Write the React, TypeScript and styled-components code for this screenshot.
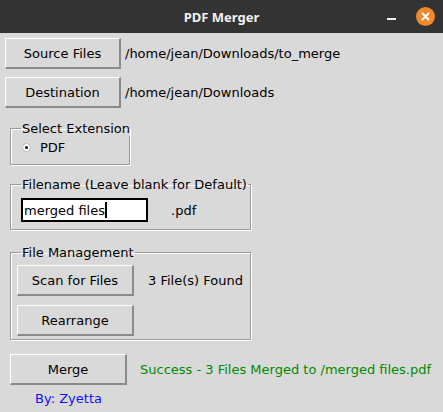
import styled, { createGlobalStyle } from 'styled-components'

const GlobalStyle = createGlobalStyle`
  html, body {
    margin: 0;
    padding: 0;
    background: #d9d9d9;
  }
  body {
    font-family: "DejaVu Sans", sans-serif;
    font-size: 13px;
    color: #000;
  }
`

const Window = styled.div({
  width: '443px',
  height: '412px',
  background: '#d9d9d9',
  display: 'flex',
  flexDirection: 'column',
  overflow: 'hidden',
})

const TitleBar = styled.div({
  height: '33px',
  background: '#333333',
  display: 'flex',
  alignItems: 'center',
  justifyContent: 'center',
  position: 'relative',
  flexShrink: 0,
})

const TitleText = styled.div({
  color: '#f2f2f2',
  fontFamily: '"Noto Sans", "Open Sans", sans-serif',
  fontWeight: 700,
  fontSize: '13px',
})

const WindowControls = styled.div({
  position: 'absolute',
  right: '8px',
  top: '7px',
  display: 'flex',
  alignItems: 'center',
  gap: '20px',
})

const MinimizeBar = styled.span({
  width: '9px',
  height: '2px',
  background: '#f0f0f0',
  marginTop: '4px',
})

const CloseButton = styled.span({
  width: '19px',
  height: '19px',
  borderRadius: '50%',
  background: '#f0882c',
  display: 'flex',
  alignItems: 'center',
  justifyContent: 'center',
})

const Content = styled.div({
  display: 'flex',
  flexDirection: 'column',
  padding: '5px 0 0 5px',
})

const PathRow = styled.div({
  display: 'flex',
  alignItems: 'center',
  gap: '4px',
  marginBottom: '8px',
})

const Button = styled.div<{ $width?: number }>((p) => ({
  width: `${p.$width ?? 116}px`,
  height: '31px',
  boxSizing: 'border-box',
  display: 'flex',
  alignItems: 'center',
  justifyContent: 'center',
  background: '#d9d9d9',
  borderTop: '1px solid #ffffff',
  borderLeft: '1px solid #ffffff',
  borderRight: '2px solid #8a8a8a',
  borderBottom: '2px solid #8a8a8a',
  flexShrink: 0,
}))

const Group = styled.fieldset<{ $width: number; $height: number; $top: number }>((p) => ({
  margin: `${p.$top}px 0 0 5px`,
  width: `${p.$width}px`,
  height: `${p.$height}px`,
  boxSizing: 'border-box',
  padding: '0 6px',
  border: '1px solid #9c9c9c',
  boxShadow: 'inset 1px 1px 0 #ffffff, 1px 1px 0 #ffffff',
  minWidth: 0,
}))

const GroupLabel = styled.legend({
  padding: '0 1px',
  marginLeft: '4px',
  lineHeight: '15px',
  whiteSpace: 'nowrap',
})

const RadioRow = styled.div({
  display: 'flex',
  alignItems: 'center',
  gap: '9px',
  padding: '4px 0 0 5px',
  lineHeight: '15px',
})

const RadioMark = styled.span({
  width: '9px',
  height: '9px',
  boxSizing: 'border-box',
  borderRadius: '50%',
  background: '#ffffff',
  border: '1px solid #b8b8b8',
  display: 'flex',
  alignItems: 'center',
  justifyContent: 'center',
  '&::after': {
    content: '""',
    width: '3px',
    height: '3px',
    borderRadius: '50%',
    background: '#000',
  },
})

const EntryRow = styled.div({
  display: 'flex',
  alignItems: 'center',
  gap: '23px',
  padding: '6px 0 0 4px',
})

const Entry = styled.div({
  width: '127px',
  height: '24px',
  boxSizing: 'border-box',
  border: '2px solid #000',
  background: '#ffffff',
  display: 'flex',
  alignItems: 'center',
  padding: '0 1px',
})

const Caret = styled.span({
  width: '2px',
  height: '16px',
  background: '#000',
})

const ManageGrid = styled.div({
  display: 'grid',
  gridTemplateColumns: '117px auto',
  columnGap: '14px',
  rowGap: '9px',
  alignItems: 'center',
  padding: '5px 0 0 0',
})

const Footer = styled.div({
  display: 'grid',
  gridTemplateColumns: '117px auto',
  columnGap: '13px',
  alignItems: 'center',
  margin: '14px 0 0 5px',
})

const Status = styled.span({
  color: '#008a00',
})

const Credit = styled.span({
  color: '#1010ff',
  textAlign: 'center',
  lineHeight: '16px',
  marginTop: '6px',
})

export default function App() {
  return (
    <Window>
      <GlobalStyle />
      <TitleBar>
        <TitleText>PDF Merger</TitleText>
        <WindowControls>
          <MinimizeBar />
          <CloseButton>
            <svg width='9' height='9' viewBox='0 0 9 9'>
              <path d='M1.5 1.5 L7.5 7.5 M7.5 1.5 L1.5 7.5' stroke='#fff' strokeWidth='2' strokeLinecap='round' />
            </svg>
          </CloseButton>
        </WindowControls>
      </TitleBar>
      <Content>
        <PathRow>
          <Button>Source Files</Button>
          <span>/home/jean/Downloads/to_merge</span>
        </PathRow>
        <PathRow>
          <Button>Destination</Button>
          <span>/home/jean/Downloads</span>
        </PathRow>

        <Group $width={120} $height={44} $top={5}>
          <GroupLabel>Select Extension</GroupLabel>
          <RadioRow>
            <RadioMark />
            <span>PDF</span>
          </RadioRow>
        </Group>

        <Group $width={241} $height={53} $top={12}>
          <GroupLabel>Filename (Leave blank for Default)</GroupLabel>
          <EntryRow>
            <Entry>
              merged files
              <Caret />
            </Entry>
            <span>.pdf</span>
          </EntryRow>
        </Group>

        <Group $width={241} $height={95} $top={15}>
          <GroupLabel>File Management</GroupLabel>
          <ManageGrid>
            <Button $width={117}>Scan for Files</Button>
            <span>3 File(s) Found</span>
            <Button $width={117}>Rearrange</Button>
          </ManageGrid>
        </Group>

        <Footer>
          <Button $width={117}>Merge</Button>
          <Status>Success - 3 Files Merged to /merged files.pdf</Status>
          <Credit>By: Zyetta</Credit>
        </Footer>
      </Content>
    </Window>
  )
}
